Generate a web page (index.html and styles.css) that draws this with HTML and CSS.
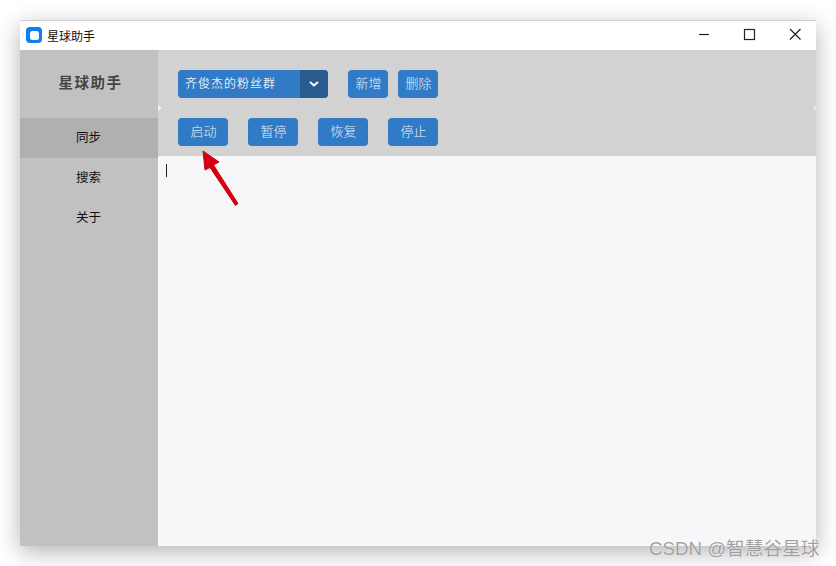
FILE: index.html
```html
<!DOCTYPE html>
<html lang="zh-CN">
<head>
    <meta charset="UTF-8">
    <title>星球助手</title>
    <link rel="stylesheet" href="styles.css">
</head>
<body>
    <div class="window">
        <div class="titlebar">
            <div class="app-icon"><span></span></div>
            <div class="app-name">星球助手</div>
            <div class="win-controls">
                <svg width="46" height="29" viewBox="0 0 46 29"><path d="M21 13.500h10" stroke="#222" stroke-width="1.2"/></svg>
                <svg width="46" height="29" viewBox="0 0 46 29"><rect x="20.500" y="8.500" width="10" height="10" fill="none" stroke="#222" stroke-width="1.2"/></svg>
                <svg width="46" height="29" viewBox="0 0 46 29"><path d="M20 8l10.500 10.500M30.500 8L20 18.500" stroke="#222" stroke-width="1.2"/></svg>
            </div>
        </div>
        <div class="main">
            <div class="sidebar">
                <div class="logo-title">星球助手</div>
                <div class="nav-item active">同步</div>
                <div class="nav-item">搜索</div>
                <div class="nav-item">关于</div>
            </div>
            <div class="content">
                <div class="toolbar">
                    <div class="row">
                        <div class="combo">
                            <div class="combo-text">齐俊杰的粉丝群</div>
                            <div class="combo-arrow">
                                <svg width="10" height="6" viewBox="0 0 10 6"><path d="M1 1l4 3.500L9 1" fill="none" stroke="#fff" stroke-width="2"/></svg>
                            </div>
                        </div>
                        <button class="btn small first">新增</button>
                        <button class="btn small">删除</button>
                    </div>
                    <div class="row spaced">
                        <button class="btn">启动</button>
                        <button class="btn">暂停</button>
                        <button class="btn">恢复</button>
                        <button class="btn">停止</button>
                    </div>
                </div>
                <div class="log"><span class="caret"></span></div>
            </div>
        </div>
    </div>

    <svg class="arrow" width="50" height="64" viewBox="0 0 50 64">
        <path d="M5 3L7 22L12 19.500L37.500 57.500L40 55.500L15.500 17L21 14Z" fill="#d40010" stroke="#d40010" stroke-width="1" stroke-linejoin="round"/>
    </svg>
    <div class="watermark">CSDN @智慧谷星球</div>
</body>
</html>
```

FILE: styles.css
```css
body {
    margin: 0;
    height: 566px;
    overflow: hidden;
    background-color: #fff;
    font-family: "Liberation Sans", "Noto Sans CJK SC", sans-serif;
}

.window {
    width: 796px;
    height: 525px;
    margin: 20px 0 0 20px;
    display: flex;
    flex-direction: column;
    background-color: #fff;
    border-top: 1px solid #d0d0d0;
    box-shadow: 0 6px 22px rgba(0, 0, 0, 0.3);
}

.titlebar {
    height: 29px;
    display: flex;
    align-items: center;
    padding-left: 6px;
}

.app-icon {
    width: 16px;
    height: 16px;
    margin-top: -1px;
    border-radius: 4px;
    background-color: #0d7ff2;
    display: flex;
    align-items: center;
    justify-content: center;
}

.app-icon span {
    width: 9px;
    height: 9px;
    border-radius: 2.500px;
    background-color: #fff;
}

.app-name {
    margin-left: 5px;
    font-size: 12px;
    color: #111;
}

.win-controls {
    margin-left: auto;
    display: flex;
}

.main {
    flex: 1;
    display: flex;
    min-height: 0;
}

.sidebar {
    width: 138px;
    background-color: #c1c1c1;
}

.logo-title {
    height: 68px;
    line-height: 67px;
    padding-left: 3px;
    text-align: center;
    font-size: 14.500px;
    font-weight: bold;
    letter-spacing: 1.500px;
    color: #444;
}

.nav-item {
    height: 40px;
    line-height: 41px;
    padding-right: 1px;
    text-align: center;
    font-size: 12.500px;
    color: #111;
}

.nav-item.active {
    background-color: #b0b0b0;
}

.content {
    flex: 1;
    display: flex;
    flex-direction: column;
    background-color: #c1c1c1;
}

.toolbar {
    position: relative;
    height: 106px;
    box-sizing: border-box;
    padding: 20px 0 0 20px;
    background-color: #d2d2d2;
    border-radius: 3px 0 0 3px;
}

/* the little white notches on the splitter edges */
.toolbar::before,
.toolbar::after {
    content: "";
    position: absolute;
    top: 55px;
    width: 4px;
    height: 6px;
    background-color: #f2f2f2;
    clip-path: polygon(0 0, 100% 50%, 0 100%);
}

.toolbar::before {
    left: 0;
}

.toolbar::after {
    right: 0;
    width: 2px;
}

.row {
    display: flex;
    height: 28px;
}

.spaced {
    margin-top: 20px;
    gap: 20px;
}

.btn {
    width: 50px;
    height: 28px;
    padding: 0 0 4px 1px;
    border: none;
    border-radius: 4px;
    background-color: #317ac6;
    color: #e6eef8;
    font-family: inherit;
    font-size: 13px;
    font-weight: 300;
}

.btn.small {
    width: 40px;
    margin-left: 10px;
}

.btn.first {
    margin-left: 20px;
}

.combo {
    width: 150px;
    height: 28px;
    display: flex;
    border-radius: 4px;
    overflow: hidden;
    background-color: #317ac6;
}

.combo-text {
    flex: 1;
    padding-left: 7px;
    line-height: 29px;
    font-size: 12px;
    letter-spacing: 1px;
    color: #dfe9f5;
}

.combo-arrow {
    width: 28px;
    display: flex;
    align-items: center;
    justify-content: center;
    background-color: #2b5c8f;
}

.log {
    flex: 1;
    padding: 8px 0 0 8px;
    background-color: #f7f7fa;
}

.caret {
    display: block;
    width: 1px;
    height: 13px;
    background-color: #222;
}

/* annotation and watermark drawn on top of the screenshot */
.arrow {
    position: absolute;
    left: 198px;
    top: 148px;
}

.watermark {
    position: absolute;
    left: 649px;
    top: 533px;
    font-size: 18.700px;
    color: rgba(130, 130, 130, 0.75);
    text-shadow: 0 0 1px #fff;
    white-space: nowrap;
}
```
